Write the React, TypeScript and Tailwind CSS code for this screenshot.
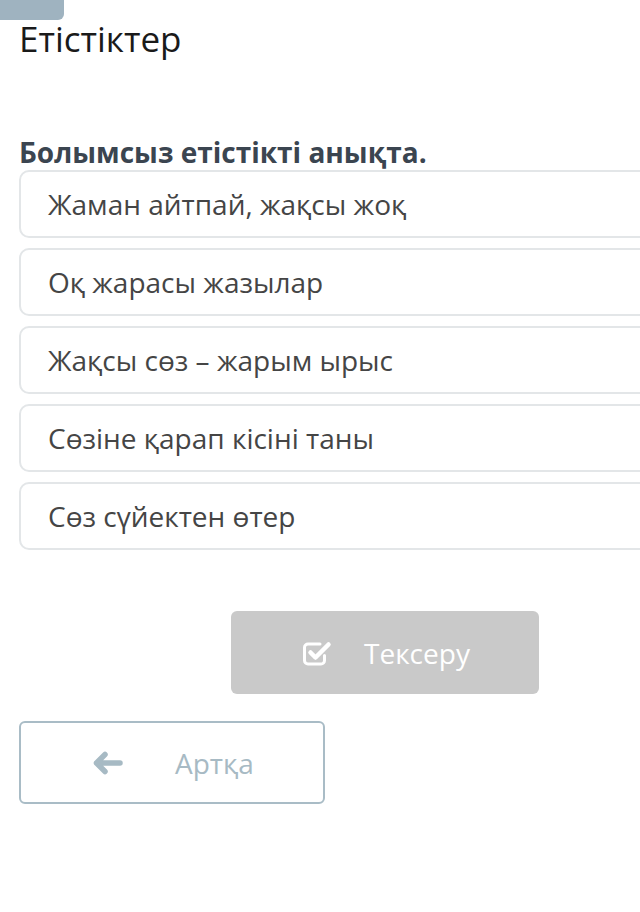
const options = [
  "Жаман айтпай, жақсы жоқ",
  "Оқ жарасы жазылар",
  "Жақсы сөз – жарым ырыс",
  "Сөзіне қарап кісіні таны",
  "Сөз сүйектен өтер",
];

export default function App() {
  return (
    <div className="w-[640px] h-[912px] overflow-hidden bg-white font-['Open_Sans',sans-serif]">
      <div className="w-[64px] h-[20px] bg-[#9fb3c0] rounded-br-md" />

      <h1 className="pl-[19px] text-[35px] leading-[40px] text-[#1a1a1a] font-normal -mt-[1px]">Етістіктер</h1>

      <div className="pl-[19px] mt-[78px]">
        <p className="text-[28px] leading-[30px] font-bold text-[#3b4550]">Болымсыз етістікті анықта.</p>

        <div className="mt-[3px] flex flex-col gap-[10px]">
          {options.map((o) => (
            <div
              key={o}
              className="w-[660px] h-[68px] flex items-center pl-[27px] border-2 border-[#e3e6e8] rounded-[10px] text-[28px] text-[#454545]"
            >
              {o}
            </div>
          ))}
        </div>

        <div className="mt-[61px] ml-[212px] w-[308px] h-[83px] rounded-md bg-[#c9c9c9] flex items-center text-white">
          <svg className="ml-[70px]" width="32" height="28" viewBox="0 0 32 28" fill="none" stroke="white" strokeLinecap="round" strokeLinejoin="round">
            <path d="M19 5 H7 a3.5 3.5 0 0 0 -3.5 3.5 v13 a3.5 3.5 0 0 0 3.5 3.5 h13 a3.5 3.5 0 0 0 3.5 -3.5 v-5" strokeWidth="3" />
            <path d="M9.5 13.5 l5 5 l13 -13" strokeWidth="4.5" />
          </svg>
          <span className="ml-[31px] text-[28px]">Тексеру</span>
        </div>

        <div className="mt-[27px] w-[306px] h-[83px] rounded-md border-2 border-[#a9bcc6] flex items-center text-[#a7bac4]">
          <svg className="ml-[72px]" width="30" height="24" viewBox="0 0 30 24" fill="none" stroke="#a7bac4" strokeLinecap="round" strokeLinejoin="round">
            <path d="M12 3.5 L3.5 12 L12 20.5 M3.5 12 H27" strokeWidth="5.5" />
          </svg>
          <span className="ml-[52px] text-[28px]">Артқа</span>
        </div>
      </div>
    </div>
  );
}
